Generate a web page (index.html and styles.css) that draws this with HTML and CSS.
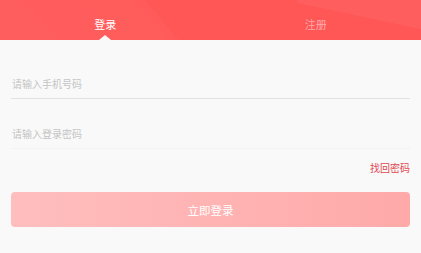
FILE: index.html
```html
<!DOCTYPE html>
<html lang="zh">
<head>
<meta charset="utf-8">
<link rel="stylesheet" href="styles.css">
</head>
<body>
<div class="page">
  <header class="tabs">
    <div class="shape shape-a"></div>
    <div class="shape shape-b"></div>
    <div class="tab active">登录</div>
    <div class="tab">注册</div>
  </header>
  <main class="form">
    <div class="field field-phone"><span class="placeholder">请输入手机号码</span></div>
    <div class="field field-pass"><span class="placeholder">请输入登录密码</span></div>
    <div class="forgot-row"><a class="forgot">找回密码</a></div>
    <button class="submit">立即登录</button>
  </main>
</div>
</body>
</html>
```
FILE: styles.css
```css
html, body {
  margin: 0;
  padding: 0;
  background: #f9f9f9;
  font-family: "Noto Sans CJK SC", "Noto Sans", sans-serif;
}
.page {
  width: 421px;
  height: 253px;
  overflow: hidden;
}
.tabs {
  position: relative;
  height: 40px;
  display: flex;
  background: #ff5656;
  overflow: hidden;
}
.shape {
  position: absolute;
  pointer-events: none;
}
.shape-a {
  left: -80px;
  top: -10px;
  width: 250px;
  height: 80px;
  background: linear-gradient(90deg, rgba(255,255,255,0.06), rgba(255,255,255,0.03));
  transform: skewX(40deg);
}
.shape-b {
  right: -40px;
  top: -40px;
  width: 160px;
  height: 60px;
  background: rgba(255,255,255,0.05);
  transform: rotate(12deg);
}
.tab {
  position: relative;
  flex: 1;
  text-align: center;
  color: rgba(255,255,255,0.5);
  font-size: 11px;
  line-height: 48px;
}
.tab.active {
  color: #ffffff;
}
.tab.active::after {
  content: "";
  position: absolute;
  left: 50%;
  bottom: 0;
  margin-left: -6px;
  border-left: 6px solid transparent;
  border-right: 6px solid transparent;
  border-bottom: 5px solid #f9f9f9;
}
.form {
  padding: 0 11px;
}
.field {
  height: 50px;
  border-bottom: 1px solid #e2e2e2;
  display: flex;
  align-items: center;
  box-sizing: border-box;
}
.field-phone {
  height: 59px;
  padding-top: 28px;
}
.field-pass {
  padding-top: 20px;
  border-bottom-color: #f2f2f2;
}
.placeholder {
  color: #c4c4c4;
  font-size: 10px;
  padding-left: 1px;
}
.forgot-row {
  display: flex;
  justify-content: flex-end;
  padding-top: 12px;
  height: 32px;
  box-sizing: border-box;
}
.forgot {
  color: #e0484f;
  font-size: 10px;
  line-height: 14px;
}
.submit {
  display: block;
  width: 100%;
  height: 35px;
  margin-top: 11px;
  border: none;
  border-radius: 4px;
  background: linear-gradient(90deg, #ffbebe, #ffa9a9);
  color: #ffffff;
  font-family: inherit;
  font-size: 11.5px;
}
```
